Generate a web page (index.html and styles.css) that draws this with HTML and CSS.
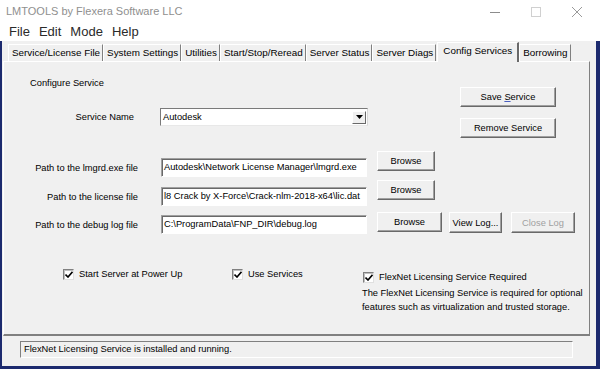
FILE: index.html
```html
<!DOCTYPE html>
<html lang="en">
<head>
 <meta charset="UTF-8">
 <title>LMTOOLS by Flexera Software LLC</title>
 <link rel="stylesheet" href="styles.css">
</head>
<body>
<div class="window">
 <div class="titlebar">
  <span class="title">LMTOOLS by Flexera Software LLC</span>
  <div class="controls">
   <svg class="ctl" width="12" height="12" viewBox="0 0 12 12"><line x1="1" y1="6.5" x2="11" y2="6.5" stroke="#8c8c8c" stroke-width="1"/></svg>
   <svg class="ctl" width="12" height="12" viewBox="0 0 12 12"><rect x="1.5" y="1.5" width="9" height="9" fill="none" stroke="#d0d0d0" stroke-width="1"/></svg>
   <svg class="ctl" width="12" height="12" viewBox="0 0 12 12"><path d="M1 1L11 11M11 1L1 11" stroke="#9a9a9a" stroke-width="1"/></svg>
  </div>
 </div>
 <div class="menubar">
  <span>File</span><span>Edit</span><span>Mode</span><span>Help</span>
 </div>
 <div class="client">
  <div class="tabs">
   <div class="tab">Service/License File</div>
   <div class="tab">System Settings</div>
   <div class="tab">Utilities</div>
   <div class="tab">Start/Stop/Reread</div>
   <div class="tab">Server Status</div>
   <div class="tab">Server Diags</div>
   <div class="tab active">Config Services</div>
   <div class="tab">Borrowing</div>
  </div>
  <div class="panel">
   <div class="config">
    <div class="config-main">
     <div class="heading">Configure Service</div>
     <div class="row service">
      <label class="label">Service Name</label>
      <div class="combo">
       <span class="combo-text">Autodesk</span>
       <span class="combo-btn"><svg width="7" height="4" viewBox="0 0 7 4"><path d="M0 0H7L3.5 4Z" fill="#000"/></svg></span>
      </div>
     </div>
    </div>
    <div class="config-side">
     <button class="btn wide" type="button">Save <u>S</u>ervice</button>
     <button class="btn wide" type="button">Remove Service</button>
    </div>
   </div>

   <div class="path-row first">
    <div class="field">
     <label class="label">Path to the lmgrd.exe file</label>
     <div class="input">Autodesk\Network License Manager\lmgrd.exe</div>
    </div>
    <button class="btn browse" type="button">Browse</button>
   </div>
   <div class="path-row second">
    <div class="field">
     <label class="label">Path to the license file</label>
     <div class="input">l8 Crack by X-Force\Crack-nlm-2018-x64\lic.dat</div>
    </div>
    <button class="btn browse" type="button">Browse</button>
   </div>
   <div class="path-row third">
    <div class="field">
     <label class="label">Path to the debug log file</label>
     <div class="input">C:\ProgramData\FNP_DIR\debug.log</div>
    </div>
    <button class="btn browse long" type="button">Browse</button>
    <button class="btn viewlog" type="button">View Log...</button>
    <button class="btn closelog" type="button" disabled>Close Log</button>
   </div>

   <div class="options">
    <div class="check"><span class="box"><svg width="8" height="7" viewBox="0 0 8 7"><path d="M0.5 3.5L3 6L7.5 0.8" fill="none" stroke="#000" stroke-width="1.6"/></svg></span>Start Server at Power Up</div>
    <div class="check"><span class="box"><svg width="8" height="7" viewBox="0 0 8 7"><path d="M0.5 3.5L3 6L7.5 0.8" fill="none" stroke="#000" stroke-width="1.6"/></svg></span>Use Services</div>
    <div class="flexnet">
     <div class="check"><span class="box"><svg width="8" height="7" viewBox="0 0 8 7"><path d="M0.5 3.5L3 6L7.5 0.8" fill="none" stroke="#000" stroke-width="1.6"/></svg></span>FlexNet Licensing Service Required</div>
     <p class="note">The FlexNet Licensing Service is required for optional<br>features such as virtualization and trusted storage.</p>
    </div>
   </div>
  </div>
  <div class="statusarea">
   <div class="status">FlexNet Licensing Service is installed and running.</div>
  </div>
 </div>
</div>
</body>
</html>
```

FILE: styles.css
```css
html, body{
  margin: 0;
  padding: 0;
  background: #ffffff;
}
.window{
  width: 600px;
  height: 369px;
  overflow: hidden;
  font-family: "Liberation Sans", Arial, sans-serif;
  font-size: 9.3px;
  color: #000;
}
.titlebar{
  height: 21px;
  display: flex;
  align-items: center;
  background: #fff;
}
.title{
  margin-left: 6px;
  font-size: 11px;
  color: #8f8f8f;
}
.controls{
  margin-left: auto;
  display: flex;
  gap: 29px;
  margin-right: 17px;
  margin-top: 2px;
}
.ctl{
  display: block;
}
.menubar{
  height: 20px;
  display: flex;
  align-items: center;
  gap: 9px;
  padding-left: 9px;
  font-size: 13px;
  color: #2a2a2a;
  background: #fff;
}
.client{
  height: 325px;
  background: #f0f0f0;
  border-left: 2px solid #1c2a6e;
  border-right: 4px solid #1c2a6e;
  border-bottom: 3px solid #1c2a6e;
}
.tabs{
  height: 20px;
  display: flex;
  align-items: flex-end;
  padding-left: 6px;
  font-size: 9.85px;
}
.tab{
  height: 16px;
  line-height: 16px;
  padding: 0 2px 0 3px;
  border-left: 1px solid #ffffff;
  border-right: 1px solid #808080;
  border-top: 1px solid #ffffff;
  white-space: nowrap;
}
.tab.active{
  height: 19px;
  line-height: 15px;
  padding: 0 5px;
  margin: 0 0 -1px 1px;
  background: #f0f0f0;
  border-right: 2px solid #696969;
  position: relative;
}
.panel{
  height: 272px;
  margin-right: 6px;
  margin-left: 1px;
  border-top: 1px solid #ffffff;
  border-left: 1px solid #ffffff;
  border-right: 1px solid #808080;
  border-bottom: 2px solid #808080;
}
.config{
  display: flex;
  align-items: flex-start;
}
.config-main{
  flex: 1;
}
.heading{
  margin: 15px 0 0 26px;
  line-height: 12px;
}
.row{
  display: flex;
  align-items: center;
}
.service{
  margin-top: 19px;
}
.label{
  width: 134px;
  text-align: right;
  white-space: nowrap;
}
.service .label{
  padding-right: 4px;
  width: 130px;
}
.combo{
  margin-left: 22px;
  width: 206px;
  height: 16px;
  display: flex;
  align-items: center;
  background: #fff;
  border: 1px solid;
  border-color: #7a7a7a #d8d8d8 #e8e8e8 #7a7a7a;
}
.combo-text{
  padding-left: 2px;
  flex: 1;
}
.combo-btn{
  width: 14px;
  height: 13px;
  margin-right: 1px;
  display: flex;
  align-items: center;
  justify-content: center;
  background: #f0f0f0;
  border: 1px solid;
  border-color: #ffffff #696969 #696969 #ffffff;
  box-sizing: border-box;
}
.combo-btn svg{
  display: block;
}
.config-side{
  display: flex;
  flex-direction: column;
  gap: 11px;
  margin: 25px 33px 0 0;
}
.btn{
  font-family: inherit;
  font-size: 9.3px;
  color: #000;
  background: #f0f0f0;
  border: 1px solid;
  border-color: #ffffff #696969 #696969 #ffffff;
  box-shadow: inset -1px -1px #a0a0a0;
  padding: 0;
  height: 20px;
}
.btn.wide{
  width: 96px;
}
.btn u{
  text-decoration-color: #4a5fc0;
}
.path-row{
  display: flex;
  align-items: flex-start;
}
.path-row.first{
  margin-top: 13px;
}
.path-row.second{
  margin-top: 3px;
}
.path-row.third{
  margin-top: 6px;
}
.field{
  display: flex;
  align-items: center;
  margin-top: 7px;
}
.third .field{
  margin-top: 3px;
}
.input{
  margin-left: 23px;
  width: 202px;
  height: 17px;
  line-height: 17px;
  padding-left: 2px;
  overflow: hidden;
  white-space: nowrap;
  background: #fff;
  border: 1px solid;
  border-color: #a0a0a0 #ffffff #ffffff #a0a0a0;
  box-shadow: inset 1px 1px #696969;
}
.btn.browse{
  width: 58px;
  margin-left: 10px;
}
.btn.browse.long{
  width: 65px;
}
.btn.viewlog{
  width: 53px;
  height: 21px;
  margin-left: 7px;
}
.btn.closelog{
  width: 64px;
  height: 21px;
  margin-left: 9px;
  color: #a0a0a0;
}
.options{
  margin-top: 34px;
  display: grid;
  grid-template-columns: 169px 131px auto;
  padding-left: 59px;
  align-items: start;
}
.check{
  display: flex;
  align-items: center;
  gap: 5px;
  line-height: 12px;
}
.box{
  width: 9px;
  height: 9px;
  display: flex;
  align-items: center;
  justify-content: center;
  background: #fff;
  border: 1px solid;
  border-color: #808080 #e0e0e0 #e0e0e0 #808080;
  box-shadow: inset 1px 1px #c0c0c0;
}
.box svg{
  display: block;
}
.flexnet{
  margin-top: 3px;
}
.note{
  margin: 3px 0 0 -1px;
  line-height: 14px;
}
.statusarea{
  padding: 5px 0 0 18px;
}
.status{
  width: 548px;
  height: 15px;
  line-height: 15px;
  padding-left: 3px;
  border: 1px solid;
  border-color: #808080 #ffffff #ffffff #808080;
}
```
